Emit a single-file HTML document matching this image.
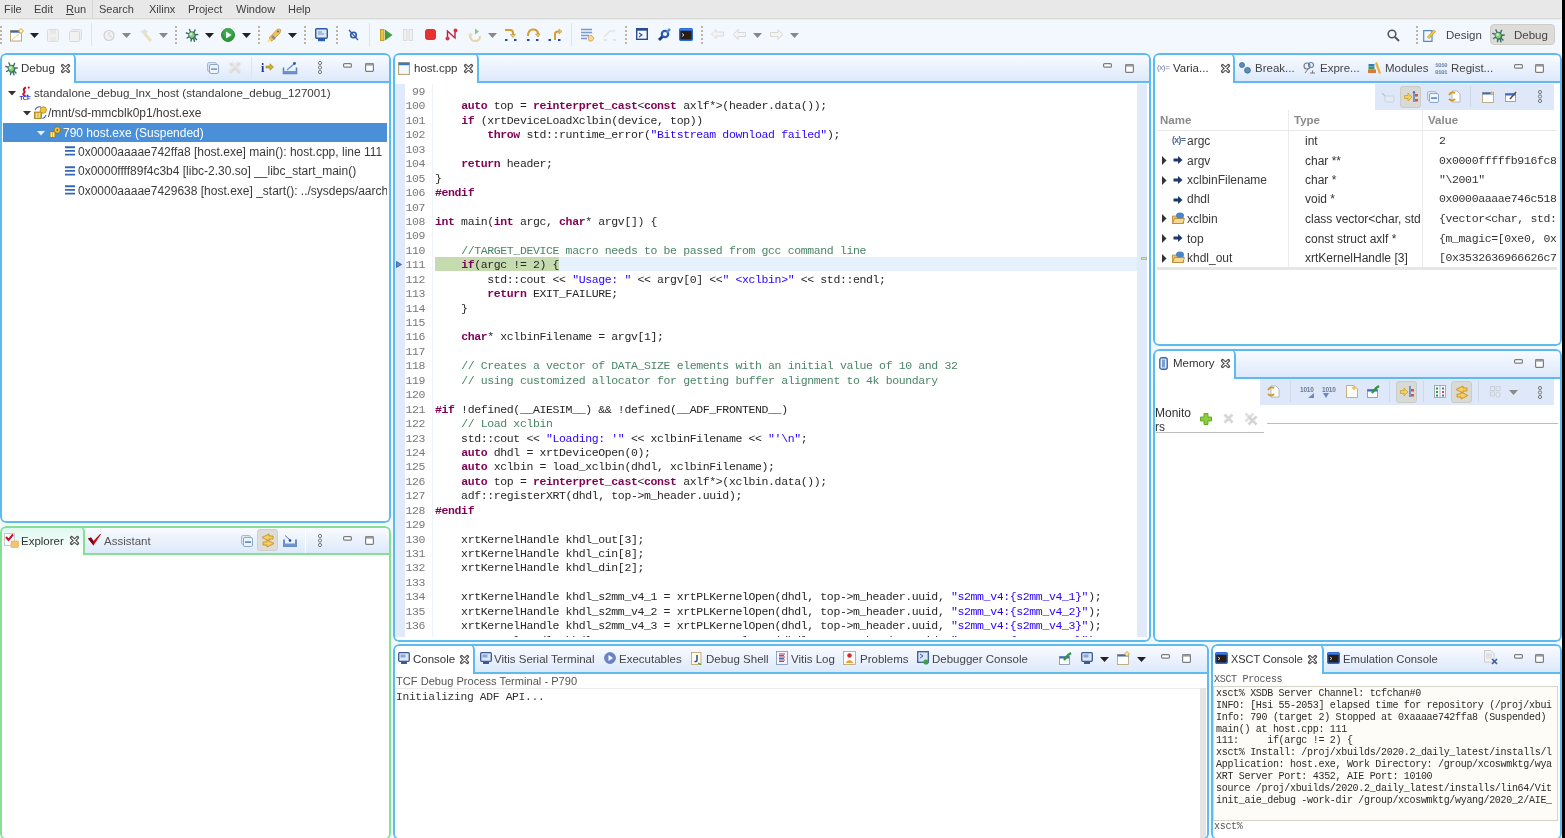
<!DOCTYPE html>
<html><head><meta charset="utf-8">
<style>
*{box-sizing:border-box}
html,body{margin:0;padding:0}
body{width:1565px;height:838px;overflow:hidden;position:relative;background:#f3f7fe;font-family:"Liberation Sans",sans-serif;font-size:12px;color:#222}
.a{position:absolute;white-space:pre}
.menu{position:absolute;left:0;top:0;width:1562px;height:19px;background:#e8e8e8;border-bottom:1px solid #d9d9d5}
.menu span{position:absolute;top:3px;font-size:11px;color:#404040}
.blk{position:absolute;left:1562px;top:0;width:3px;height:838px;background:#000}
.pnl{position:absolute;border-radius:6px;background:#fff;overflow:hidden}
.pnl::after{content:'';position:absolute;left:0;top:0;right:0;bottom:0;border:2px solid #5dbbef;border-radius:6px;pointer-events:none;z-index:9}
.pnl.g::after{border-color:#86e094}
.hdr{position:absolute;left:0;top:0;right:0;height:30px;background:linear-gradient(#fbfcff,#dde9fb);border-bottom:2px solid #5dbbef}
.g .hdr{border-bottom-color:#86e094}
.tab{position:absolute;left:0;top:0;height:30px;background:#fff;border-right:2px solid #5dbbef;border-top-right-radius:6px}
.g .tab{border-right-color:#86e094}
.mono{font-family:"Liberation Mono",monospace}
.code{position:absolute;font-family:"Liberation Mono",monospace;font-size:11.5px;letter-spacing:-0.37px;line-height:14.43px;white-space:pre;color:#262626}
.k{color:#7f0055;font-weight:bold}
.s{color:#2a00ff}
.c{color:#4a8566}
.ln{position:absolute;font-family:"Liberation Mono",monospace;font-size:11.5px;letter-spacing:-0.37px;line-height:14.43px;white-space:pre;color:#787878;text-align:right}
.ic{position:absolute;overflow:visible}
.t{position:absolute;white-space:pre;font-size:11.5px;line-height:14px;color:#333}
.tr{position:absolute;white-space:pre;font-size:12px;line-height:14px;color:#3a3a3a}
</style></head><body><div id="root" style="position:absolute;left:0;top:0;width:1565px;height:838px;overflow:hidden;will-change:transform">
<div class="menu">
<span style="left:4px">File</span><span style="left:34px">Edit</span><span style="left:66px"><u style="text-decoration-thickness:1px">R</u>un</span>
<div style="position:absolute;left:92px;top:0;width:1px;height:18px;background:#d4d4d0"></div>
<span style="left:99px">Search</span><span style="left:149px">Xilinx</span><span style="left:188px">Project</span><span style="left:236px">Window</span><span style="left:288px">Help</span>
</div>
<div class="blk"></div>
<div style="position:absolute;left:0;top:19px;width:1562px;height:1px;background:#e9edf2"></div>
<div style="position:absolute;left:0px;top:26px;width:2px;height:19px;background:repeating-linear-gradient(#bdb3a0 0 2px,transparent 2px 4px)"></div>
<svg class="ic" style="left:10px;top:28px" width="14" height="14" viewBox="0 0 14 14"><rect x="0.5" y="2.5" width="11" height="10.5" fill="#fff" stroke="#b8a060" stroke-width="0.9"/><rect x="0.5" y="2.5" width="11" height="2.2" fill="#3a6ab8"/><path d="M2 12L10 5" stroke="#e6c870" stroke-width="0.8"/><path d="M11 0.5L13.5 3L11 5.5L8.5 3Z" fill="#fff4c0" stroke="#c89a20" stroke-width="0.9"/></svg>
<svg class="ic" style="left:30px;top:33px" width="9" height="5" viewBox="0 0 9 5"><path d="M0 0H9L4.5 5Z" fill="#222"/></svg>
<svg class="ic" style="left:47px;top:29px" width="12" height="13" viewBox="0 0 12 13"><rect x="0.5" y="0.5" width="11" height="12" rx="1" fill="#f0f0f0" stroke="#dcdcdc"/><rect x="3" y="1" width="6" height="4" fill="#e6e6e6"/><rect x="3" y="8" width="6" height="4" fill="#e8e8e8"/></svg>
<svg class="ic" style="left:69px;top:29px" width="13" height="13" viewBox="0 0 13 13"><rect x="2.5" y="0.5" width="10" height="10" rx="1" fill="#f0f0f0" stroke="#dcdcdc"/><rect x="0.5" y="2.5" width="10" height="10" rx="1" fill="#f2f2f2" stroke="#d8d8d8"/></svg>
<div style="position:absolute;left:91px;top:23px;width:1px;height:23px;background:#dde3ea"></div>
<svg class="ic" style="left:103px;top:29px" width="12" height="13" viewBox="0 0 12 13"><circle cx="6" cy="6.5" r="5" fill="#f2f2f2" stroke="#d0d0d0" stroke-width="1.2"/><path d="M6 3V6.5L8.5 8" stroke="#d6d6d6" stroke-width="1.2" fill="none"/></svg>
<svg class="ic" style="left:122px;top:33px" width="9" height="5" viewBox="0 0 9 5"><path d="M0 0H9L4.5 5Z" fill="#888"/></svg>
<svg class="ic" style="left:138px;top:28px" width="15" height="15" viewBox="0 0 15 15"><path d="M2 4L7 1L10 4L7 6Z" fill="#e0e0e0"/><path d="M6 5L13 13" stroke="#e8e0c0" stroke-width="3"/></svg>
<svg class="ic" style="left:159px;top:33px" width="9" height="5" viewBox="0 0 9 5"><path d="M0 0H9L4.5 5Z" fill="#888"/></svg>
<div style="position:absolute;left:175px;top:26px;width:2px;height:19px;background:repeating-linear-gradient(#bdb3a0 0 2px,transparent 2px 4px)"></div>
<svg class="ic" style="left:185px;top:28px" width="14" height="14" viewBox="0 0 14 14"><g transform="translate(0.5 0.5)"><g stroke="#3a6a66" stroke-width="1.4" stroke-linecap="round"><path d="M4 1L5 3.5M9.5 1.5L8.5 4M0.8 4.5L3.2 5.2M12.2 6L9.8 6.2M1.5 9.5L3.5 8.3M11 11L9 9M5.5 12.5L6 10M9 12.8L8.2 10.2"/></g><ellipse cx="6.5" cy="6.8" rx="3.6" ry="3.9" transform="rotate(-30 6.5 6.8)" fill="#2e7a6a"/><ellipse cx="6.2" cy="6.5" rx="2.6" ry="2.9" transform="rotate(-30 6.2 6.5)" fill="#8cc878"/><circle cx="5.6" cy="5.8" r="1.3" fill="#d8f0c0"/></g></svg>
<svg class="ic" style="left:205px;top:33px" width="9" height="5" viewBox="0 0 9 5"><path d="M0 0H9L4.5 5Z" fill="#222"/></svg>
<svg class="ic" style="left:221px;top:28px" width="14" height="14" viewBox="0 0 14 14"><circle cx="7" cy="7" r="6.5" fill="#2a9a3a" stroke="#1a7a2a" stroke-width="0.8"/><circle cx="7" cy="5" r="5" fill="#4ab85a" opacity="0.6"/><path d="M5 3.5V10.5L10.5 7Z" fill="#fff"/></svg>
<svg class="ic" style="left:242px;top:33px" width="9" height="5" viewBox="0 0 9 5"><path d="M0 0H9L4.5 5Z" fill="#222"/></svg>
<div style="position:absolute;left:258px;top:26px;width:2px;height:19px;background:repeating-linear-gradient(#bdb3a0 0 2px,transparent 2px 4px)"></div>
<svg class="ic" style="left:267px;top:28px" width="15" height="15" viewBox="0 0 15 15"><path d="M4 13L2 10L10 1.5Q13 0.5 13.5 1.5Q14 3 13 5L5 13Z" fill="#f0c060" stroke="#c8902a" stroke-width="0.7"/><path d="M5 8L8 11" stroke="#8a8a9a" stroke-width="2.5"/><circle cx="11" cy="3.5" r="1" fill="#3a6ab8"/><path d="M1 14L3 11.5" stroke="#f8e090" stroke-width="2"/></svg>
<svg class="ic" style="left:288px;top:33px" width="9" height="5" viewBox="0 0 9 5"><path d="M0 0H9L4.5 5Z" fill="#222"/></svg>
<div style="position:absolute;left:304px;top:26px;width:2px;height:19px;background:repeating-linear-gradient(#bdb3a0 0 2px,transparent 2px 4px)"></div>
<svg class="ic" style="left:315px;top:28px" width="13" height="14" viewBox="0 0 13 14"><rect x="0.7" y="0.7" width="11.6" height="9.6" rx="1.2" fill="#dbe6f6" stroke="#2a5aa8" stroke-width="1.4"/><path d="M3 4H7M3 6H9" stroke="#5a7ab8" stroke-width="0.8"/><rect x="3" y="11" width="7" height="2.2" fill="#2a5aa8"/></svg>
<div style="position:absolute;left:336px;top:26px;width:2px;height:19px;background:repeating-linear-gradient(#bdb3a0 0 2px,transparent 2px 4px)"></div>
<svg class="ic" style="left:348px;top:29px" width="11" height="12" viewBox="0 0 11 12"><path d="M1 1L10 11" stroke="#3a5aa8" stroke-width="1.2"/><circle cx="5.5" cy="6" r="2.8" fill="none" stroke="#2a5ab0" stroke-width="1.6"/></svg>
<div style="position:absolute;left:369px;top:23px;width:1px;height:23px;background:#dde3ea"></div>
<svg class="ic" style="left:380px;top:29px" width="13" height="12" viewBox="0 0 13 12"><rect x="0.5" y="0.5" width="3.5" height="11" fill="#e8c440" stroke="#b89010" stroke-width="0.8"/><path d="M5 0.5V11.5L12.5 6Z" fill="#3aa040"/></svg>
<svg class="ic" style="left:403px;top:29px" width="10" height="12" viewBox="0 0 10 12"><rect x="0.5" y="0.5" width="3.5" height="11" fill="#f0f0f0" stroke="#dcdcdc"/><rect x="6" y="0.5" width="3.5" height="11" fill="#f0f0f0" stroke="#dcdcdc"/></svg>
<svg class="ic" style="left:425px;top:29px" width="11" height="11" viewBox="0 0 11 11"><rect x="0.5" y="0.5" width="10" height="10" rx="2" fill="#e83030" stroke="#c82020" stroke-width="0.8"/></svg>
<svg class="ic" style="left:445px;top:28px" width="13" height="13" viewBox="0 0 13 13"><path d="M2.5 10.5V3L10 10V2.5" fill="none" stroke="#c02040" stroke-width="1.4"/><circle cx="2.5" cy="10.5" r="2" fill="#e03040"/><circle cx="10.5" cy="2.5" r="2" fill="#e03040"/></svg>
<svg class="ic" style="left:468px;top:28px" width="13" height="14" viewBox="0 0 13 14"><path d="M7 0.5L11 3.5L7 6.5Z" fill="#8ac890"/><path d="M2 7Q2 13 7 13Q12 13 12 8" fill="none" stroke="#e8d4a8" stroke-width="2"/><circle cx="2.5" cy="7" r="1.5" fill="#f4e8c8" stroke="#e0c890" stroke-width="0.6"/></svg>
<svg class="ic" style="left:488px;top:33px" width="9" height="5" viewBox="0 0 9 5"><path d="M0 0H9L4.5 5Z" fill="#888"/></svg>
<svg class="ic" style="left:504px;top:28px" width="13" height="14" viewBox="0 0 13 14"><path d="M1 2H6Q9 2 9 5V7" fill="none" stroke="#d4a030" stroke-width="2"/><path d="M6.5 6.5H11.5L9 9.5Z" fill="#f4d070" stroke="#b88a20" stroke-width="0.6"/><g fill="#2a4aa0"><rect x="1" y="11" width="2.5" height="2"/><rect x="10" y="11" width="2.5" height="2"/></g></svg>
<svg class="ic" style="left:526px;top:28px" width="14" height="14" viewBox="0 0 14 14"><path d="M2 8Q2 1.5 7 1.5Q12 1.5 12 6" fill="none" stroke="#d4a030" stroke-width="2"/><path d="M9.5 6H14L12 9Z" fill="#f4d070" stroke="#b88a20" stroke-width="0.6"/><g fill="#2a4aa0"><rect x="1" y="11" width="2.5" height="2"/><rect x="10" y="11" width="2.5" height="2"/></g></svg>
<svg class="ic" style="left:548px;top:28px" width="14" height="14" viewBox="0 0 14 14"><path d="M7 12V6Q7 3.5 10 3.5H12" fill="none" stroke="#d4a030" stroke-width="2"/><path d="M11 1L14 3.5L11 6Z" fill="#f4d070" stroke="#b88a20" stroke-width="0.6"/><g fill="#2a4aa0"><rect x="0.5" y="11" width="2.5" height="2"/><rect x="10" y="11" width="2.5" height="2"/></g></svg>
<div style="position:absolute;left:571px;top:23px;width:1px;height:23px;background:#dde3ea"></div>
<svg class="ic" style="left:581px;top:28px" width="14" height="14" viewBox="0 0 14 14"><g stroke="#7a9ad0" stroke-width="1.4"><path d="M0 1.5H11M0 4.5H11M0 7.5H8M0 10.5H6"/></g><path d="M7 9L10 7L13 10L11 13H8Z" fill="#f8d8a0" stroke="#d0a050" stroke-width="0.8"/></svg>
<svg class="ic" style="left:603px;top:28px" width="14" height="14" viewBox="0 0 14 14"><path d="M1 9L7 3H11" fill="none" stroke="#e4e4e4" stroke-width="1.6"/><path d="M10 1L13 3L10 5Z" fill="#e8e8e8"/><path d="M1 12H4M10 12H13" stroke="#dedede" stroke-width="1.5"/></svg>
<div style="position:absolute;left:625px;top:26px;width:2px;height:19px;background:repeating-linear-gradient(#bdb3a0 0 2px,transparent 2px 4px)"></div>
<svg class="ic" style="left:636px;top:28px" width="12" height="12" viewBox="0 0 12 12"><rect x="0.7" y="0.7" width="10.6" height="10.6" fill="#f4f8ff" stroke="#2a4a98" stroke-width="1.4"/><rect x="0.7" y="0.7" width="10.6" height="2" fill="#2a4a98"/><path d="M3 5L6 7L3 9" fill="none" stroke="#2a4a98" stroke-width="1.1"/></svg>
<svg class="ic" style="left:657px;top:28px" width="14" height="14" viewBox="0 0 14 14"><path d="M2 12L6 8" stroke="#1a3a80" stroke-width="3"/><circle cx="8" cy="6" r="3.2" fill="none" stroke="#2a5ab0" stroke-width="2.2"/><path d="M10 4L13 1" stroke="#5a8ad0" stroke-width="2.5"/></svg>
<svg class="ic" style="left:679px;top:28px" width="14" height="13" viewBox="0 0 14 13"><rect x="0.7" y="0.7" width="12.6" height="11.6" rx="1.2" fill="#2a1e14" stroke="#2a6ae0" stroke-width="1.4"/><rect x="0.7" y="0.7" width="12.6" height="2" fill="#3a7ae8"/><path d="M3 5.5L5 7L3 8.5" fill="none" stroke="#ddd" stroke-width="0.9"/></svg>
<div style="position:absolute;left:701px;top:26px;width:2px;height:19px;background:repeating-linear-gradient(#bdb3a0 0 2px,transparent 2px 4px)"></div>
<svg class="ic" style="left:711px;top:29px" width="13" height="11" viewBox="0 0 13 11"><path d="M5 0.5L0.5 5L5 9.5V7H12.5V3H5Z" fill="#f4f4f4" stroke="#d8d8d8" stroke-width="0.9"/></svg>
<svg class="ic" style="left:733px;top:29px" width="13" height="11" viewBox="0 0 13 11"><path d="M5 0.5L0.5 5.5L5 10.5V7.5H12.5V3.5H5Z" fill="#f4f4f4" stroke="#d4d4d4" stroke-width="0.9"/></svg>
<svg class="ic" style="left:753px;top:33px" width="9" height="5" viewBox="0 0 9 5"><path d="M0 0H9L4.5 5Z" fill="#888"/></svg>
<svg class="ic" style="left:770px;top:29px" width="13" height="11" viewBox="0 0 13 11"><path d="M8 0.5L12.5 5.5L8 10.5V7.5H0.5V3.5H8Z" fill="#f4f4f4" stroke="#d4d4d4" stroke-width="0.9"/></svg>
<svg class="ic" style="left:790px;top:33px" width="9" height="5" viewBox="0 0 9 5"><path d="M0 0H9L4.5 5Z" fill="#888"/></svg>
<svg class="ic" style="left:1387px;top:29px" width="13" height="13" viewBox="0 0 13 13"><circle cx="5" cy="5" r="3.8" fill="none" stroke="#555" stroke-width="1.6"/><path d="M8 8L12 12" stroke="#555" stroke-width="2"/></svg>
<div style="position:absolute;left:1416px;top:26px;width:2px;height:19px;background:repeating-linear-gradient(#bdb3a0 0 2px,transparent 2px 4px)"></div>
<svg class="ic" style="left:1423px;top:28px" width="14" height="14" viewBox="0 0 14 14"><path d="M0.7 2.7H9V13.3H0.7Z" fill="#f4f8ff" stroke="#5a86c8" stroke-width="1.2"/><path d="M5 10L12 2.5" stroke="#c89a20" stroke-width="2.6"/><path d="M5 10L12 2.5" stroke="#f0d060" stroke-width="1.2"/></svg>
<div class="t" style="left:1446px;top:28px;color:#444">Design</div>
<div style="position:absolute;left:1490px;top:24px;width:65px;height:21px;background:#dddcd8;border:1px solid #cdccc8;border-radius:4px"></div>
<svg class="ic" style="left:1492px;top:29px" width="13" height="13" viewBox="0 0 13 13"><g stroke="#3a6a66" stroke-width="1.4" stroke-linecap="round"><path d="M4 1L5 3.5M9.5 1.5L8.5 4M0.8 4.5L3.2 5.2M12.2 6L9.8 6.2M1.5 9.5L3.5 8.3M11 11L9 9M5.5 12.5L6 10M9 12.8L8.2 10.2"/></g><ellipse cx="6.5" cy="6.8" rx="3.6" ry="3.9" transform="rotate(-30 6.5 6.8)" fill="#2e7a6a"/><ellipse cx="6.2" cy="6.5" rx="2.6" ry="2.9" transform="rotate(-30 6.2 6.5)" fill="#8cc878"/><circle cx="5.6" cy="5.8" r="1.3" fill="#d8f0c0"/></svg>
<div class="t" style="left:1514px;top:28px;color:#444">Debug</div>

<!-- Debug panel -->
<div class="pnl" style="left:0;top:53px;width:391px;height:470px">
 <div class="hdr"></div>
 <div class="tab" style="width:76px"></div>
 <svg class="ic" style="left:5px;top:9px" width="13" height="13" viewBox="0 0 13 13"><g stroke="#3a6a66" stroke-width="1.4" stroke-linecap="round"><path d="M4 1L5 3.5M9.5 1.5L8.5 4M0.8 4.5L3.2 5.2M12.2 6L9.8 6.2M1.5 9.5L3.5 8.3M11 11L9 9M5.5 12.5L6 10M9 12.8L8.2 10.2"/></g><ellipse cx="6.5" cy="6.8" rx="3.6" ry="3.9" transform="rotate(-30 6.5 6.8)" fill="#2e7a6a"/><ellipse cx="6.2" cy="6.5" rx="2.6" ry="2.9" transform="rotate(-30 6.2 6.5)" fill="#8cc878"/><circle cx="5.6" cy="5.8" r="1.3" fill="#d8f0c0"/></svg>
 <div class="t" style="left:21px;top:8px;color:#333">Debug</div>
 <svg class="ic x" style="left:61px;top:11px" width="9" height="9" viewBox="0 0 9 9"><path d="M1.6 1.6L7.4 7.4M7.4 1.6L1.6 7.4" stroke="#4a4a4a" stroke-width="3.4" stroke-linecap="round"/><path d="M1.9 1.9L7.1 7.1M7.1 1.9L1.9 7.1" stroke="#fff" stroke-width="1.3" stroke-linecap="round"/></svg>
 <svg class="ic" style="left:207px;top:9px" width="12" height="12" viewBox="0 0 12 12"><rect x="0.5" y="0.5" width="9" height="9" rx="1.5" fill="#dbe6f3" stroke="#a9bcd6"/><rect x="2.5" y="2.5" width="9" height="9" rx="1.5" fill="#eef4fb" stroke="#8aa8cc"/><rect x="4" y="6.3" width="6" height="1.6" fill="#7b9cc6"/></svg>
 <svg class="ic" style="left:228px;top:8px" width="14" height="14" viewBox="0 0 14 14"><path d="M2 2L12 12M12 2L2 12" stroke="#dcdcdc" stroke-width="3"/><path d="M4 1L13 10M10 1L1 10" stroke="#e8e8e8" stroke-width="2"/></svg>
 <div style="position:absolute;left:251px;top:4px;width:1px;height:21px;background:#dfe5ee"></div>
 <svg class="ic" style="left:261px;top:9px" width="13" height="10" viewBox="0 0 13 10"><text x="0" y="9.5" font-family="Liberation Serif" font-weight="bold" font-size="12" fill="#1a2aa0">i</text><path d="M5 4H9V1.8L12.5 5L9 8.2V6H5Z" fill="#d6b22a" stroke="#9a7d10" stroke-width="0.6"/></svg>
 <svg class="ic" style="left:283px;top:9px" width="14" height="12" viewBox="0 0 14 12"><path d="M0.5 5.5V11.5H13.5V5.5" fill="none" stroke="#5d83c0" stroke-width="1.6"/><rect x="0.5" y="9" width="13" height="2.5" fill="#6f93cc"/><path d="M4 8L11 2" stroke="#6b8ec8" stroke-width="1.2"/><circle cx="11.5" cy="1.5" r="1.4" fill="#1f56b0"/></svg>
 <svg class="ic" style="left:317px;top:8px" width="6" height="13" viewBox="0 0 6 13"><g fill="none" stroke="#7a7a7a" stroke-width="1"><circle cx="3" cy="2" r="1.6"/><circle cx="3" cy="6.5" r="1.6"/><circle cx="3" cy="11" r="1.6"/></g></svg>
 <svg class="ic" style="left:343px;top:10px" width="9" height="5" viewBox="0 0 9 5"><rect x="0.6" y="0.6" width="7.8" height="3.6" rx="1" fill="#fff" stroke="#7d7d7d" stroke-width="1.2"/></svg>
 <svg class="ic" style="left:365px;top:10px" width="9" height="9" viewBox="0 0 9 9"><rect x="0.6" y="0.6" width="7.8" height="7.8" rx="0.8" fill="#fff" stroke="#7d7d7d" stroke-width="1.2"/><rect x="0.6" y="0.6" width="7.8" height="2" fill="#9a9a9a"/></svg>
 <!-- tree -->
 <div style="position:absolute;left:3px;top:70px;width:384px;height:19px;background:#4a90d9"></div>
 <svg class="ic" style="left:8px;top:38px" width="8" height="5" viewBox="0 0 8 5"><path d="M0 0H8L4 4.5Z" fill="#333"/></svg>
 <svg class="ic" style="left:20px;top:33px" width="12" height="14" viewBox="0 0 12 14"><path d="M6 1.5Q3 2.5 4 4.5Q5.5 6 3.5 7.5Q2.5 9 5.5 10" fill="none" stroke="#c8102a" stroke-width="2"/><circle cx="8.8" cy="1.6" r="1.1" fill="#e81020"/><circle cx="7.5" cy="9.6" r="1" fill="#c8102a"/><text x="-0.5" y="14" font-family="Liberation Sans" font-weight="bold" font-size="6" fill="#2030f0" letter-spacing="-0.3">TCF</text></svg>
 <div class="tr" style="left:34px;top:33px;font-size:11.6px">standalone_debug_lnx_host (standalone_debug_127001)</div>
 <svg class="ic" style="left:23px;top:58px" width="8" height="5" viewBox="0 0 8 5"><path d="M0 0H8L4 4.5Z" fill="#333"/></svg>
 <svg class="ic" style="left:34px;top:53px" width="13" height="13" viewBox="0 0 13 13"><rect x="0.5" y="6" width="7" height="6.5" fill="#d8b446" stroke="#a07a10" stroke-width="0.8"/><path d="M2.8 7V12M5.2 7V12" stroke="#fff3c0" stroke-width="0.9"/><circle cx="9.2" cy="4" r="3.2" fill="#f2c442" stroke="#b8870a" stroke-width="0.8"/><path d="M1 4Q3 0 7 1" fill="none" stroke="#3a6ab8" stroke-width="1.1"/><path d="M12 9Q11 12 8.5 12.5" fill="none" stroke="#3a6ab8" stroke-width="1.1"/></svg>
 <div class="tr" style="left:48px;top:53px">/mnt/sd-mmcblk0p1/host.exe</div>
 <svg class="ic" style="left:37px;top:78px" width="8" height="5" viewBox="0 0 8 5"><path d="M0 0H8L4 4.5Z" fill="#e8f0fa"/></svg>
 <svg class="ic" style="left:49px;top:73px" width="12" height="12" viewBox="0 0 12 12"><rect x="0.5" y="5.5" width="6" height="6" fill="#d8b446" stroke="#a07a10" stroke-width="0.8"/><path d="M2.5 6.5V11M4.5 6.5V11" stroke="#fff3c0" stroke-width="0.9"/><circle cx="8.3" cy="4" r="3.2" fill="#f2c442" stroke="#8a6a10" stroke-width="0.8"/><circle cx="8.3" cy="4" r="1" fill="#8a6a10"/></svg>
 <div class="tr" style="left:63px;top:73px;color:#fff">790 host.exe (Suspended)</div>
 <svg class="ic" style="left:65px;top:93px" width="10" height="10" viewBox="0 0 10 10"><path d="M0 1.2H10M0 4.9H10M0 8.6H10" stroke="#3568b4" stroke-width="1.9"/></svg>
 <div class="tr" style="left:78px;top:92px">0x0000aaaae742ffa8 [host.exe] main(): host.cpp, line 111</div>
 <svg class="ic" style="left:65px;top:113px" width="10" height="10" viewBox="0 0 10 10"><path d="M0 1.2H10M0 4.9H10M0 8.6H10" stroke="#3568b4" stroke-width="1.9"/></svg>
 <div class="tr" style="left:78px;top:111px">0x0000ffff89f4c3b4 [libc-2.30.so] __libc_start_main()</div>
 <svg class="ic" style="left:65px;top:132px" width="10" height="10" viewBox="0 0 10 10"><path d="M0 1.2H10M0 4.9H10M0 8.6H10" stroke="#3568b4" stroke-width="1.9"/></svg>
 <div class="tr" style="left:78px;top:131px;width:309px;overflow:hidden">0x0000aaaae7429638 [host.exe] _start(): ../sysdeps/aarch64/start.S</div>
</div>

<div class="pnl g" style="left:0px;top:526px;width:391px;height:314px">
<div class="hdr" style="height:29px"></div>
<div class="tab" style="width:85px;height:29px;background:linear-gradient(#dcf8ef,#fff)"></div>
<div style="position:absolute;left:0px;top:-526px">
<svg class="ic" style="left:4px;top:533px" width="15" height="15" viewBox="0 0 15 15"><rect x="0.5" y="0.5" width="10" height="12" fill="#fff" stroke="#c9c9c9"/><path d="M2 4L4.5 7L9 1.5" fill="none" stroke="#c8102e" stroke-width="2"/><rect x="7" y="8" width="7.5" height="6.5" rx="1" fill="#f2c470" stroke="#d9a84e" stroke-width="0.6"/></svg>
<div class="t" style="left:21px;top:534px;color:#333">Explorer</div>
<svg class="ic" style="left:70px;top:536px" width="9" height="9" viewBox="0 0 9 9"><path d="M1.6 1.6L7.4 7.4M7.4 1.6L1.6 7.4" stroke="#4a4a4a" stroke-width="3.4" stroke-linecap="round"/><path d="M1.9 1.9L7.1 7.1M7.1 1.9L1.9 7.1" stroke="#fff" stroke-width="1.3" stroke-linecap="round"/></svg>
<svg class="ic" style="left:88px;top:533px" width="14" height="13" viewBox="0 0 14 13"><path d="M0 5.5L5.5 12.5L13.5 0.5L11.5 1.5L5.5 8L3 4.5Z" fill="#c01020"/><path d="M0 5.5L5.5 12.5L5.5 8L3 4.5Z" fill="#7a0810"/></svg>
<div class="t" style="left:104px;top:534px;color:#555">Assistant</div>
<svg class="ic" style="left:241px;top:535px" width="12" height="12" viewBox="0 0 12 12"><rect x="0.5" y="0.5" width="9" height="9" rx="1.5" fill="#dbe6f3" stroke="#a9bcd6"/><rect x="2.5" y="2.5" width="9" height="9" rx="1.5" fill="#eef4fb" stroke="#8aa8cc"/><rect x="4" y="6.3" width="6" height="1.6" fill="#5d86c0"/></svg>
<div style="position:absolute;left:257px;top:529px;width:21px;height:22px;background:#dcdcd8;border:1px solid #cfcfcb;border-radius:3px"></div>
<svg class="ic" style="left:261px;top:533px" width="14" height="15" viewBox="0 0 14 15"><path d="M8 1L1 4.5L8 8V6H12V3H8Z" fill="#f3cf6a" stroke="#c98f1a" stroke-width="0.9"/><path d="M6 7L13 10.5L6 14V12H2V9H6Z" fill="#f3cf6a" stroke="#c98f1a" stroke-width="0.9"/></svg>
<svg class="ic" style="left:283px;top:535px" width="14" height="12" viewBox="0 0 14 12"><path d="M1 4.5V11H13V4.5" fill="none" stroke="#5d83c0" stroke-width="1.8"/><rect x="1" y="8.5" width="12" height="3" fill="#6f93cc"/><path d="M2 0.5L7 5" stroke="#5070b8" stroke-width="1"/><circle cx="7" cy="5.5" r="1.3" fill="#1f3fa0"/></svg>
<div style="position:absolute;left:305px;top:529px;width:1px;height:24px;background:#fff"></div>
<svg class="ic" style="left:317px;top:534px" width="6" height="13" viewBox="0 0 6 13"><g fill="none" stroke="#7a7a7a" stroke-width="1"><circle cx="3" cy="2" r="1.6"/><circle cx="3" cy="6.5" r="1.6"/><circle cx="3" cy="11" r="1.6"/></g></svg>
<svg class="ic" style="left:343px;top:536px" width="9" height="5" viewBox="0 0 9 5"><rect x="0.6" y="0.6" width="7.8" height="3.6" rx="1" fill="#fff" stroke="#7d7d7d" stroke-width="1.2"/></svg>
<svg class="ic" style="left:365px;top:536px" width="9" height="9" viewBox="0 0 9 9"><rect x="0.6" y="0.6" width="7.8" height="7.8" rx="0.8" fill="#fff" stroke="#7d7d7d" stroke-width="1.2"/><rect x="0.6" y="0.6" width="7.8" height="2" fill="#9a9a9a"/></svg>
</div></div>

<!-- Editor panel -->
<div class="pnl" style="left:393px;top:53px;width:758px;height:589px">
 <div class="hdr"></div>
 <div class="tab" style="width:86px"></div>
 <svg class="ic" style="left:5px;top:9px" width="12" height="13" viewBox="0 0 12 13"><rect x="0.6" y="0.6" width="10.8" height="11.8" fill="#f4f8fc" stroke="#b8a878" stroke-width="1.1"/><rect x="0.6" y="0.6" width="10.8" height="2.6" fill="#3a78c0"/></svg>
 <div class="t" style="left:21px;top:8px;color:#333">host.cpp</div>
 <svg class="ic" style="left:71px;top:11px" width="9" height="9" viewBox="0 0 9 9"><path d="M1.6 1.6L7.4 7.4M7.4 1.6L1.6 7.4" stroke="#4a4a4a" stroke-width="3.4" stroke-linecap="round"/><path d="M1.9 1.9L7.1 7.1M7.1 1.9L1.9 7.1" stroke="#fff" stroke-width="1.3" stroke-linecap="round"/></svg>
 <svg class="ic" style="left:710px;top:10px" width="9" height="5" viewBox="0 0 9 5"><rect x="0.6" y="0.6" width="7.8" height="3.6" rx="1" fill="#fff" stroke="#7d7d7d" stroke-width="1.2"/></svg>
 <svg class="ic" style="left:732px;top:11px" width="9" height="9" viewBox="0 0 9 9"><rect x="0.6" y="0.6" width="7.8" height="7.8" rx="0.8" fill="#fff" stroke="#7d7d7d" stroke-width="1.2"/><rect x="0.6" y="0.6" width="7.8" height="2" fill="#9a9a9a"/></svg>
 <div style="position:absolute;left:2px;top:31px;width:10px;height:553px;background:#e0eafb"></div>
 <div style="position:absolute;left:39px;top:31px;width:1px;height:553px;background:#eef3fb"></div>
 <div style="position:absolute;left:744px;top:31px;width:10px;height:553px;background:#e0eafb"></div>
 <div style="position:absolute;left:748px;top:204px;width:6px;height:3px;background:#c8e0b0;border:1px solid #a8c890"></div>
 <div style="position:absolute;left:42px;top:204px;width:702px;height:14.43px;background:#e6f1fe"></div>
 <div style="position:absolute;left:42px;top:204px;width:124px;height:14.43px;background:#c6dcb0"></div>
 <svg class="ic" style="left:3px;top:208px" width="6" height="7" viewBox="0 0 6 7"><path d="M0.5 0.5L5.5 3.5L0.5 6.5Z" fill="#5a8ad0" stroke="#2a5aa0" stroke-width="0.8"/></svg>
<div class="ln" style="left:2px;top:32px;width:30px;height:552px;overflow:hidden">99
100
101
102
103
104
105
106
107
108
109
110
111
112
113
114
115
116
117
118
119
120
121
122
123
124
125
126
127
128
129
130
131
132
133
134
135
136
137</div>
<div class="code" style="left:42px;top:32px;width:702px;height:552px;overflow:hidden">
    <span class="k">auto</span> top = <span class="k">reinterpret_cast</span>&lt;<span class="k">const</span> axlf*&gt;(header.data());
    <span class="k">if</span> (xrtDeviceLoadXclbin(device, top))
        <span class="k">throw</span> std::runtime_error(<span class="s">&quot;Bitstream download failed&quot;</span>);

    <span class="k">return</span> header;
}
<span class="k">#endif</span>

<span class="k">int</span> main(<span class="k">int</span> argc, <span class="k">char</span>* argv[]) {

    <span class="c">//TARGET_DEVICE macro needs to be passed from gcc command line</span>
    <span class="k">if</span>(argc != 2) {
        std::cout &lt;&lt; <span class="s">&quot;Usage: &quot;</span> &lt;&lt; argv[0] &lt;&lt;<span class="s">&quot; &lt;xclbin&gt;&quot;</span> &lt;&lt; std::endl;
        <span class="k">return</span> EXIT_FAILURE;
    }

    <span class="k">char</span>* xclbinFilename = argv[1];

    <span class="c">// Creates a vector of DATA_SIZE elements with an initial value of 10 and 32</span>
    <span class="c">// using customized allocator for getting buffer alignment to 4k boundary</span>

<span class="k">#if</span> !defined(__AIESIM__) &amp;&amp; !defined(__ADF_FRONTEND__)
    <span class="c">// Load xclbin</span>
    std::cout &lt;&lt; <span class="s">&quot;Loading: &#x27;&quot;</span> &lt;&lt; xclbinFilename &lt;&lt; <span class="s">&quot;&#x27;\n&quot;</span>;
    <span class="k">auto</span> dhdl = xrtDeviceOpen(0);
    <span class="k">auto</span> xclbin = load_xclbin(dhdl, xclbinFilename);
    <span class="k">auto</span> top = <span class="k">reinterpret_cast</span>&lt;<span class="k">const</span> axlf*&gt;(xclbin.data());
    adf::registerXRT(dhdl, top-&gt;m_header.uuid);
<span class="k">#endif</span>

    xrtKernelHandle khdl_out[3];
    xrtKernelHandle khdl_cin[8];
    xrtKernelHandle khdl_din[2];

    xrtKernelHandle khdl_s2mm_v4_1 = xrtPLKernelOpen(dhdl, top-&gt;m_header.uuid, <span class="s">&quot;s2mm_v4:{s2mm_v4_1}&quot;</span>);
    xrtKernelHandle khdl_s2mm_v4_2 = xrtPLKernelOpen(dhdl, top-&gt;m_header.uuid, <span class="s">&quot;s2mm_v4:{s2mm_v4_2}&quot;</span>);
    xrtKernelHandle khdl_s2mm_v4_3 = xrtPLKernelOpen(dhdl, top-&gt;m_header.uuid, <span class="s">&quot;s2mm_v4:{s2mm_v4_3}&quot;</span>);
    xrtKernelHandle khdl_mm2s_v4_1 = xrtPLKernelOpen(dhdl, top-&gt;m_header.uuid, <span class="s">&quot;mm2s_v4:{mm2s_v4_1}&quot;</span>);</div>
</div>

<div class="pnl" style="left:1153px;top:53px;width:409px;height:293px">
<div class="hdr"></div>
<div class="tab" style="width:82px"></div>
<div style="position:absolute;left:-1153px;top:-53px">
<div class="a" style="left:1157px;top:63px;font-size:8px;color:#6a78a0;letter-spacing:-0.4px">(x)=</div>
<div class="t" style="left:1173px;top:61px;color:#333">Varia...</div>
<svg class="ic" style="left:1221px;top:64px" width="9" height="9" viewBox="0 0 9 9"><path d="M1.6 1.6L7.4 7.4M7.4 1.6L1.6 7.4" stroke="#4a4a4a" stroke-width="3.4" stroke-linecap="round"/><path d="M1.9 1.9L7.1 7.1M7.1 1.9L1.9 7.1" stroke="#fff" stroke-width="1.3" stroke-linecap="round"/></svg>
<svg class="ic" style="left:1239px;top:62px" width="12" height="12" viewBox="0 0 12 12"><circle cx="3" cy="3" r="2.5" fill="#5a90c0" stroke="#2a5a8a" stroke-width="0.7"/><circle cx="8.5" cy="8.3" r="2.9" fill="#5a90c0" stroke="#2a5a8a" stroke-width="0.7"/></svg>
<div class="t" style="left:1255px;top:61px;color:#444">Break...</div>
<svg class="ic" style="left:1303px;top:61px" width="13" height="13" viewBox="0 0 13 13"><circle cx="4" cy="5" r="3" fill="none" stroke="#777" stroke-width="1.1"/><circle cx="8" cy="4" r="2.5" fill="none" stroke="#5a7fb0" stroke-width="1.1"/><path d="M2 12L5 8M7 12H12M9.5 9.5V12" stroke="#777" stroke-width="1"/></svg>
<div class="t" style="left:1320px;top:61px;color:#444">Expre...</div>
<svg class="ic" style="left:1368px;top:62px" width="13" height="12" viewBox="0 0 13 12"><rect x="0.5" y="2" width="6" height="2.5" rx="0.5" fill="#3a7ac8"/><rect x="0.5" y="4.5" width="6" height="3" fill="#3a9a6a"/><rect x="0" y="7.5" width="8" height="3.5" fill="#d87a3a"/><path d="M7 1L9 0L13 11L11 12Z" fill="#f0b030"/></svg>
<div class="t" style="left:1385px;top:61px;color:#444">Modules</div>
<svg class="ic" style="left:1435px;top:61px" width="12" height="13" viewBox="0 0 12 13"><text x="0" y="6" font-family="Liberation Mono" font-weight="bold" font-size="6" fill="#6a84a8" letter-spacing="-0.6">1010</text><text x="0" y="12.5" font-family="Liberation Mono" font-weight="bold" font-size="6" fill="#6a84a8" letter-spacing="-0.6">0101</text></svg>
<div class="t" style="left:1451px;top:61px;color:#444">Regist...</div>
<svg class="ic" style="left:1514px;top:64px" width="9" height="5" viewBox="0 0 9 5"><rect x="0.6" y="0.6" width="7.8" height="3.6" rx="1" fill="#fff" stroke="#7d7d7d" stroke-width="1.2"/></svg>
<svg class="ic" style="left:1535px;top:64px" width="9" height="9" viewBox="0 0 9 9"><rect x="0.6" y="0.6" width="7.8" height="7.8" rx="0.8" fill="#fff" stroke="#7d7d7d" stroke-width="1.2"/><rect x="0.6" y="0.6" width="7.8" height="2" fill="#9a9a9a"/></svg>
<div style="position:absolute;left:1375px;top:84px;width:179px;height:26px;background:#dee8f8"></div>
<svg class="ic" style="left:1380px;top:91px" width="15" height="12" viewBox="0 0 15 12"><path d="M2 2L6 6" stroke="#b8c4d8" stroke-width="1.2"/><rect x="5" y="5" width="9" height="6" rx="1" fill="#e4eaf4" stroke="#c8d2e2"/></svg>
<div style="position:absolute;left:1400px;top:86px;width:21px;height:22px;background:#d9d9d5;border:1px solid #cbcbc7;border-radius:3px"></div>
<svg class="ic" style="left:1404px;top:91px" width="14" height="12" viewBox="0 0 14 12"><path d="M0.5 4.5H4V2L8 6L4 10V7.5H0.5Z" fill="#f0d060" stroke="#c89a20" stroke-width="0.7"/><path d="M10 0V11" stroke="#3a6ab8" stroke-width="1.2"/><rect x="11" y="3" width="3" height="2.5" fill="#e05050"/><rect x="11" y="8" width="3" height="2.5" fill="#e05050"/><path d="M8.5 2L10 0L11.5 2" fill="#3a6ab8"/></svg>
<svg class="ic" style="left:1427px;top:91px" width="12" height="12" viewBox="0 0 12 12"><rect x="0.5" y="0.5" width="9" height="9" rx="1.5" fill="#dbe6f3" stroke="#a9bcd6"/><rect x="2.5" y="2.5" width="9" height="9" rx="1.5" fill="#eef4fb" stroke="#8aa8cc"/><rect x="4" y="6.3" width="6" height="1.6" fill="#5d86c0"/></svg>
<svg class="ic" style="left:1448px;top:90px" width="13" height="13" viewBox="0 0 13 13"><path d="M4 1H9L12 4V12H4Z" fill="#fff" stroke="#aaa" stroke-width="0.8"/><path d="M1 5Q3 1 7 3" fill="none" stroke="#d09a20" stroke-width="1.8"/><path d="M7 9Q4 12 1 9" fill="none" stroke="#d09a20" stroke-width="1.8"/></svg>
<div style="position:absolute;left:1470px;top:86px;width:1px;height:21px;background:#cfd8e6"></div>
<svg class="ic" style="left:1482px;top:90px" width="13" height="13" viewBox="0 0 13 13"><rect x="0.5" y="2.5" width="11" height="10" fill="#fff" stroke="#b0a070" stroke-width="0.8"/><rect x="0.5" y="2.5" width="11" height="2" fill="#3a6ab8"/><path d="M9 0.5L10.5 2L12 0.5L11 3L12.5 4.5L10.5 4L9.5 6L9.5 4L8 3.5L9.5 2.5Z" fill="#f0c050"/></svg>
<svg class="ic" style="left:1505px;top:90px" width="12" height="12" viewBox="0 0 12 12"><rect x="0.5" y="3.5" width="10" height="8" fill="#fff" stroke="#7a90b0" stroke-width="0.8"/><rect x="0.5" y="3.5" width="10" height="2" fill="#3a6ab8"/><path d="M5 9L11 2" stroke="#555" stroke-width="1.6"/></svg>
<svg class="ic" style="left:1537px;top:90px" width="6" height="13" viewBox="0 0 6 13"><g fill="none" stroke="#7a7a7a" stroke-width="1"><circle cx="3" cy="2" r="1.6"/><circle cx="3" cy="6.5" r="1.6"/><circle cx="3" cy="11" r="1.6"/></g></svg>
<div class="t" style="left:1160px;top:113px;color:#8a8a8a;font-weight:bold">Name</div>
<div class="t" style="left:1294px;top:113px;color:#8a8a8a;font-weight:bold">Type</div>
<div class="t" style="left:1428px;top:113px;color:#8a8a8a;font-weight:bold">Value</div>
<div style="position:absolute;left:1288px;top:110px;width:1px;height:158px;background:#ececec"></div>
<div style="position:absolute;left:1422px;top:110px;width:1px;height:158px;background:#ececec"></div>
<div style="position:absolute;left:1157px;top:130px;width:400px;height:1px;background:#e8e8e8"></div>
<div class="a" style="left:1172px;top:135px;font-size:8.5px;font-weight:bold;color:#4a6590;letter-spacing:-0.5px">(x)=</div>
<div class="tr" style="left:1187px;top:134px;color:#3a3a3a">argc</div>
<div class="tr" style="left:1305px;top:134px;width:116px;overflow:hidden;color:#333">int</div>
<div class="a mono" style="left:1439px;top:134px;width:118px;overflow:hidden;font-size:11.5px;letter-spacing:-0.37px;line-height:14px;color:#333">2</div>
<svg class="ic" style="left:1162px;top:156px" width="5" height="9" viewBox="0 0 5 9"><path d="M0 0V9L4.5 4.5Z" fill="#333"/></svg>
<svg class="ic" style="left:1173px;top:156px" width="10" height="8" viewBox="0 0 10 8"><path d="M0.5 2.5H5V0L9.5 4L5 8V5.5H0.5Z" fill="#1f3a6a"/></svg>
<div class="tr" style="left:1187px;top:154px;color:#3a3a3a">argv</div>
<div class="tr" style="left:1305px;top:154px;width:116px;overflow:hidden;color:#333">char **</div>
<div class="a mono" style="left:1439px;top:154px;width:118px;overflow:hidden;font-size:11.5px;letter-spacing:-0.37px;line-height:14px;color:#333">0x0000fffffb916fc8</div>
<svg class="ic" style="left:1162px;top:176px" width="5" height="9" viewBox="0 0 5 9"><path d="M0 0V9L4.5 4.5Z" fill="#333"/></svg>
<svg class="ic" style="left:1173px;top:176px" width="10" height="8" viewBox="0 0 10 8"><path d="M0.5 2.5H5V0L9.5 4L5 8V5.5H0.5Z" fill="#1f3a6a"/></svg>
<div class="tr" style="left:1187px;top:173px;color:#3a3a3a">xclbinFilename</div>
<div class="tr" style="left:1305px;top:173px;width:116px;overflow:hidden;color:#333">char *</div>
<div class="a mono" style="left:1439px;top:173px;width:118px;overflow:hidden;font-size:11.5px;letter-spacing:-0.37px;line-height:14px;color:#333">"\2001"</div>
<svg class="ic" style="left:1173px;top:196px" width="10" height="8" viewBox="0 0 10 8"><path d="M0.5 2.5H5V0L9.5 4L5 8V5.5H0.5Z" fill="#1f3a6a"/></svg>
<div class="tr" style="left:1187px;top:192px;color:#3a3a3a">dhdl</div>
<div class="tr" style="left:1305px;top:192px;width:116px;overflow:hidden;color:#333">void *</div>
<div class="a mono" style="left:1439px;top:192px;width:118px;overflow:hidden;font-size:11.5px;letter-spacing:-0.37px;line-height:14px;color:#333">0x0000aaaae746c518</div>
<svg class="ic" style="left:1162px;top:214px" width="5" height="9" viewBox="0 0 5 9"><path d="M0 0V9L4.5 4.5Z" fill="#333"/></svg>
<svg class="ic" style="left:1172px;top:212px" width="13" height="12" viewBox="0 0 13 12"><path d="M0.5 4H5L6 5.5H11.5V11.5H0.5Z" fill="#f2c060" stroke="#b07a20" stroke-width="0.7"/><path d="M0.5 11.5L2.5 6.5H12.5L11 11.5Z" fill="#f8d890" stroke="#b07a20" stroke-width="0.7"/><ellipse cx="8" cy="3.5" rx="4" ry="3" fill="#4a86c8"/></svg>
<div class="tr" style="left:1187px;top:212px;color:#3a3a3a">xclbin</div>
<div class="tr" style="left:1305px;top:212px;width:116px;overflow:hidden;color:#333">class vector&lt;char, std::allocator&lt;char&gt;&gt;</div>
<div class="a mono" style="left:1439px;top:212px;width:118px;overflow:hidden;font-size:11.5px;letter-spacing:-0.37px;line-height:14px;color:#333">{vector&lt;char, std::allocator&lt;char&gt;&gt; = ...}</div>
<svg class="ic" style="left:1162px;top:234px" width="5" height="9" viewBox="0 0 5 9"><path d="M0 0V9L4.5 4.5Z" fill="#333"/></svg>
<svg class="ic" style="left:1173px;top:234px" width="10" height="8" viewBox="0 0 10 8"><path d="M0.5 2.5H5V0L9.5 4L5 8V5.5H0.5Z" fill="#1f3a6a"/></svg>
<div class="tr" style="left:1187px;top:232px;color:#3a3a3a">top</div>
<div class="tr" style="left:1305px;top:232px;width:116px;overflow:hidden;color:#333">const struct axlf *</div>
<div class="a mono" style="left:1439px;top:232px;width:118px;overflow:hidden;font-size:11.5px;letter-spacing:-0.37px;line-height:14px;color:#333">{m_magic=[0xe0, 0x6c,...]}</div>
<svg class="ic" style="left:1162px;top:254px" width="5" height="9" viewBox="0 0 5 9"><path d="M0 0V9L4.5 4.5Z" fill="#333"/></svg>
<svg class="ic" style="left:1172px;top:251px" width="13" height="12" viewBox="0 0 13 12"><path d="M0.5 4H5L6 5.5H11.5V11.5H0.5Z" fill="#f2c060" stroke="#b07a20" stroke-width="0.7"/><path d="M0.5 11.5L2.5 6.5H12.5L11 11.5Z" fill="#f8d890" stroke="#b07a20" stroke-width="0.7"/><ellipse cx="8" cy="3.5" rx="4" ry="3" fill="#4a86c8"/></svg>
<div class="tr" style="left:1187px;top:251px;color:#3a3a3a">khdl_out</div>
<div class="tr" style="left:1305px;top:251px;width:116px;overflow:hidden;color:#333">xrtKernelHandle [3]</div>
<div class="a mono" style="left:1439px;top:251px;width:118px;overflow:hidden;font-size:11.5px;letter-spacing:-0.37px;line-height:14px;color:#333">[0x3532636966626c7]</div>
<div style="position:absolute;left:1157px;top:267px;width:400px;height:3px;background:#e6e6e6"></div>
</div></div>

<div class="pnl" style="left:1153px;top:349px;width:409px;height:293px">
<div class="hdr"></div>
<div class="tab" style="width:83px"></div>
<div style="position:absolute;left:-1153px;top:-349px">
<svg class="ic" style="left:1159px;top:357px" width="9" height="13" viewBox="0 0 9 13"><rect x="0.8" y="0.8" width="7.4" height="11.4" rx="2" fill="#e8eef8" stroke="#3a64a8" stroke-width="1.4"/><rect x="3" y="2.5" width="3" height="8" fill="#7aa0d8"/></svg>
<div class="t" style="left:1173px;top:356px;color:#333">Memory</div>
<svg class="ic" style="left:1221px;top:359px" width="9" height="9" viewBox="0 0 9 9"><path d="M1.6 1.6L7.4 7.4M7.4 1.6L1.6 7.4" stroke="#4a4a4a" stroke-width="3.4" stroke-linecap="round"/><path d="M1.9 1.9L7.1 7.1M7.1 1.9L1.9 7.1" stroke="#fff" stroke-width="1.3" stroke-linecap="round"/></svg>
<svg class="ic" style="left:1514px;top:359px" width="9" height="5" viewBox="0 0 9 5"><rect x="0.6" y="0.6" width="7.8" height="3.6" rx="1" fill="#fff" stroke="#7d7d7d" stroke-width="1.2"/></svg>
<svg class="ic" style="left:1535px;top:359px" width="9" height="9" viewBox="0 0 9 9"><rect x="0.6" y="0.6" width="7.8" height="7.8" rx="0.8" fill="#fff" stroke="#7d7d7d" stroke-width="1.2"/><rect x="0.6" y="0.6" width="7.8" height="2" fill="#9a9a9a"/></svg>
<div style="position:absolute;left:1260px;top:379px;width:294px;height:26px;background:#dee8f8"></div>
<svg class="ic" style="left:1267px;top:385px" width="13" height="13" viewBox="0 0 13 13"><path d="M4 1H9L12 4V12H4Z" fill="#fff" stroke="#aaa" stroke-width="0.8"/><path d="M1 5Q3 1 7 3" fill="none" stroke="#d09a20" stroke-width="1.8"/><path d="M7 9Q4 12 1 9" fill="none" stroke="#d09a20" stroke-width="1.8"/></svg>
<div style="position:absolute;left:1290px;top:381px;width:1px;height:21px;background:#cfd8e6"></div>
<div style="position:absolute;left:1389px;top:381px;width:1px;height:21px;background:#cfd8e6"></div>
<div style="position:absolute;left:1423px;top:381px;width:1px;height:21px;background:#cfd8e6"></div>
<div style="position:absolute;left:1478px;top:381px;width:1px;height:21px;background:#cfd8e6"></div>
<div class="a" style="left:1300px;top:386px;font-size:6.5px;font-weight:bold;color:#6a7a96;letter-spacing:-0.2px">1010</div>
<svg class="ic" style="left:1308px;top:393px" width="6" height="5" viewBox="0 0 6 5"><path d="M6 0V5H0Z" fill="#6a8ac0"/></svg>
<div class="a" style="left:1322px;top:386px;font-size:6.5px;font-weight:bold;color:#6a7a96;letter-spacing:-0.2px">1010</div>
<svg class="ic" style="left:1323px;top:393px" width="6" height="5" viewBox="0 0 6 5"><path d="M0 0H6L3 5Z" fill="#6a8ac0"/></svg>
<svg class="ic" style="left:1346px;top:385px" width="12" height="13" viewBox="0 0 12 13"><path d="M0.5 0.5H8L11.5 4V12.5H0.5Z" fill="#fff" stroke="#b8a060" stroke-width="0.8"/><path d="M8 0L9 2L11 3L9 4L8 6L7 4L5 3L7 2Z" fill="#f0c050"/></svg>
<svg class="ic" style="left:1367px;top:385px" width="13" height="13" viewBox="0 0 13 13"><rect x="0.5" y="4.5" width="10" height="8" fill="#fff" stroke="#7a90b0" stroke-width="0.8"/><rect x="0.5" y="4.5" width="10" height="2" fill="#3a6ab8"/><path d="M5 8L9 3L12 1" stroke="#2a9a3a" stroke-width="2.2"/></svg>
<div style="position:absolute;left:1396px;top:381px;width:21px;height:22px;background:#d9d9d5;border:1px solid #cbcbc7;border-radius:3px"></div>
<svg class="ic" style="left:1400px;top:386px" width="14" height="12" viewBox="0 0 14 12"><path d="M0.5 4.5H4V2L8 6L4 10V7.5H0.5Z" fill="#f0d060" stroke="#c89a20" stroke-width="0.7"/><path d="M10 0V11" stroke="#3a6ab8" stroke-width="1.2"/><rect x="11" y="3" width="3" height="2.5" fill="#e05050"/><rect x="11" y="8" width="3" height="2.5" fill="#e05050"/></svg>
<svg class="ic" style="left:1434px;top:385px" width="12" height="13" viewBox="0 0 12 13"><rect x="0.5" y="0.5" width="11" height="12" fill="#fff" stroke="#8a9ab0" stroke-width="0.8"/><path d="M6 1V12" stroke="#8a9ab0" stroke-width="0.8"/><g fill="#2a9a3a"><rect x="2" y="2.5" width="2" height="2"/><rect x="2" y="6" width="2" height="2"/><rect x="2" y="9.5" width="2" height="2"/></g><rect x="8" y="6" width="2" height="2" fill="#e04040"/><rect x="8" y="2.5" width="2" height="2" fill="#4070c0"/><rect x="8" y="9.5" width="2" height="2" fill="#4070c0"/></svg>
<div style="position:absolute;left:1451px;top:381px;width:21px;height:22px;background:#d9d9d5;border:1px solid #cbcbc7;border-radius:3px"></div>
<svg class="ic" style="left:1455px;top:385px" width="14" height="15" viewBox="0 0 14 15"><path d="M8 1L1 4.5L8 8V6H12V3H8Z" fill="#f3cf6a" stroke="#c98f1a" stroke-width="0.9"/><path d="M6 7L13 10.5L6 14V12H2V9H6Z" fill="#f3cf6a" stroke="#c98f1a" stroke-width="0.9"/></svg>
<svg class="ic" style="left:1490px;top:386px" width="11" height="12" viewBox="0 0 11 12"><g fill="none" stroke="#c8ccd4" stroke-width="0.8"><rect x="0.5" y="0.5" width="4" height="4"/><rect x="6" y="0.5" width="4" height="4"/><rect x="0.5" y="6" width="4" height="4"/><rect x="6" y="6" width="4" height="5.5" rx="2"/></g></svg>
<svg class="ic" style="left:1509px;top:390px" width="9" height="5" viewBox="0 0 9 5"><path d="M0 0H9L4.5 5Z" fill="#8a8a8a"/></svg>
<svg class="ic" style="left:1537px;top:386px" width="6" height="13" viewBox="0 0 6 13"><g fill="none" stroke="#7a7a7a" stroke-width="1"><circle cx="3" cy="2" r="1.6"/><circle cx="3" cy="6.5" r="1.6"/><circle cx="3" cy="11" r="1.6"/></g></svg>
<div class="a" style="left:1155px;top:406px;font-size:12px;line-height:14px;color:#333">Monito
rs</div>
<svg class="ic" style="left:1200px;top:413px" width="12" height="12" viewBox="0 0 12 12"><path d="M4 0.5H8V4H11.5V8H8V11.5H4V8H0.5V4H4Z" fill="#8ccf3a" stroke="#4f9a10" stroke-width="0.8"/></svg>
<svg class="ic" style="left:1223px;top:413px" width="11" height="11" viewBox="0 0 11 11"><path d="M1.5 1.5L9.5 9.5M9.5 1.5L1.5 9.5" stroke="#d8d8d8" stroke-width="3"/></svg>
<svg class="ic" style="left:1244px;top:412px" width="14" height="14" viewBox="0 0 14 14"><path d="M1.5 1.5L9.5 9.5M9.5 1.5L1.5 9.5" stroke="#e0e0e0" stroke-width="2.5"/><path d="M4.5 4.5L12.5 12.5M12.5 4.5L4.5 12.5" stroke="#d4d4d4" stroke-width="2.5"/></svg>
<div style="position:absolute;left:1156px;top:432px;width:108px;height:1px;background:#bdbdbd"></div>
<div style="position:absolute;left:1267px;top:423px;width:291px;height:1px;background:#bdbdbd"></div>
</div></div>

<div class="pnl" style="left:393px;top:644px;width:816px;height:196px">
<div class="hdr"></div>
<div class="tab" style="width:82px"></div>
<div style="position:absolute;left:-393px;top:-644px">
<svg class="ic" style="left:398px;top:652px" width="12" height="12" viewBox="0 0 12 12"><rect x="0.7" y="0.7" width="10.6" height="8.6" rx="1" fill="#dbe6f6" stroke="#3a5a98" stroke-width="1.3"/><rect x="2.5" y="2.5" width="5" height="3" fill="#8aa6d4"/><rect x="3" y="10" width="6" height="2" fill="#3a5a98"/></svg>
<div class="t" style="left:413px;top:652px;color:#333">Console</div>
<svg class="ic" style="left:460px;top:655px" width="9" height="9" viewBox="0 0 9 9"><path d="M1.6 1.6L7.4 7.4M7.4 1.6L1.6 7.4" stroke="#4a4a4a" stroke-width="3.4" stroke-linecap="round"/><path d="M1.9 1.9L7.1 7.1M7.1 1.9L1.9 7.1" stroke="#fff" stroke-width="1.3" stroke-linecap="round"/></svg>
<svg class="ic" style="left:480px;top:652px" width="12" height="12" viewBox="0 0 12 12"><rect x="0.7" y="0.7" width="10.6" height="8.6" rx="1" fill="#dbe6f6" stroke="#3a5a98" stroke-width="1.3"/><rect x="2.5" y="2.5" width="5" height="3" fill="#8aa6d4"/><rect x="3" y="10" width="6" height="2" fill="#3a5a98"/></svg>
<div class="t" style="left:494px;top:652px;color:#444">Vitis Serial Terminal</div>
<svg class="ic" style="left:604px;top:652px" width="12" height="12" viewBox="0 0 12 12"><circle cx="6" cy="6" r="5.5" fill="#6a86c8" stroke="#4a66a8" stroke-width="0.6"/><path d="M4.5 3V9L9 6Z" fill="#fff"/></svg>
<div class="t" style="left:619px;top:652px;color:#444">Executables</div>
<svg class="ic" style="left:691px;top:652px" width="11" height="13" viewBox="0 0 11 13"><rect x="0.5" y="0.5" width="9.5" height="12" fill="#fffbe8" stroke="#b8a060" stroke-width="0.8"/><path d="M6 3V8Q6 10 3.5 9.5" fill="none" stroke="#2a4aa0" stroke-width="1.5"/><path d="M7 11L10 12.5" stroke="#3aa040" stroke-width="1.2"/></svg>
<div class="t" style="left:706px;top:652px;color:#444">Debug Shell</div>
<svg class="ic" style="left:776px;top:651px" width="12" height="14" viewBox="0 0 12 14"><rect x="0.5" y="0.5" width="11" height="13" fill="#f4f6fa" stroke="#7a90b8" stroke-width="0.8"/><g stroke="#b04060" stroke-width="1"><path d="M3 3H9M3 6H9M3 9H9"/></g><g stroke="#4070c0" stroke-width="1"><path d="M3 4.5H8M3 7.5H8M3 10.5H8"/></g></svg>
<div class="t" style="left:791px;top:652px;color:#444">Vitis Log</div>
<svg class="ic" style="left:843px;top:651px" width="13" height="14" viewBox="0 0 13 14"><rect x="0.5" y="0.5" width="12" height="13" fill="#fff" stroke="#b0a070" stroke-width="0.8"/><circle cx="6.5" cy="4.5" r="2.3" fill="#d03030"/><path d="M2.5 12Q6.5 6 10.5 12Z" fill="#f0a030"/></svg>
<div class="t" style="left:860px;top:652px;color:#444">Problems</div>
<svg class="ic" style="left:917px;top:651px" width="12" height="14" viewBox="0 0 12 14"><rect x="0.7" y="0.7" width="10.6" height="10.6" fill="#dbe6f6" stroke="#3a5a98" stroke-width="1.3"/><path d="M3 3L6 5L3 7" fill="none" stroke="#3a5a98" stroke-width="1"/><circle cx="9" cy="11" r="2.6" fill="#3aa050"/></svg>
<div class="t" style="left:932px;top:652px;color:#444">Debugger Console</div>
<svg class="ic" style="left:1059px;top:652px" width="13" height="13" viewBox="0 0 13 13"><rect x="0.5" y="4.5" width="10" height="8" fill="#fff" stroke="#7a90b0" stroke-width="0.8"/><rect x="0.5" y="4.5" width="10" height="2" fill="#3a6ab8"/><path d="M5 8L9 3L12 1" stroke="#2a9a3a" stroke-width="2.2"/></svg>
<svg class="ic" style="left:1081px;top:652px" width="12" height="12" viewBox="0 0 12 12"><rect x="0.7" y="0.7" width="10.6" height="8.6" rx="1" fill="#dbe6f6" stroke="#3a5a98" stroke-width="1.3"/><rect x="2.5" y="2.5" width="5" height="3" fill="#8aa6d4"/><rect x="3" y="10" width="6" height="2" fill="#3a5a98"/></svg>
<svg class="ic" style="left:1100px;top:657px" width="9" height="5" viewBox="0 0 9 5"><path d="M0 0H9L4.5 5Z" fill="#222"/></svg>
<svg class="ic" style="left:1117px;top:651px" width="13" height="14" viewBox="0 0 13 14"><rect x="0.5" y="3.5" width="11" height="10" fill="#fff" stroke="#b0a070" stroke-width="0.8"/><rect x="0.5" y="3.5" width="11" height="2" fill="#3a6ab8"/><path d="M10 0.5L12.5 3L10 5.5L7.5 3Z" fill="#f6e8b0" stroke="#c89a20" stroke-width="0.8"/></svg>
<svg class="ic" style="left:1137px;top:657px" width="9" height="5" viewBox="0 0 9 5"><path d="M0 0H9L4.5 5Z" fill="#222"/></svg>
<svg class="ic" style="left:1161px;top:654px" width="9" height="5" viewBox="0 0 9 5"><rect x="0.6" y="0.6" width="7.8" height="3.6" rx="1" fill="#fff" stroke="#7d7d7d" stroke-width="1.2"/></svg>
<svg class="ic" style="left:1182px;top:654px" width="9" height="9" viewBox="0 0 9 9"><rect x="0.6" y="0.6" width="7.8" height="7.8" rx="0.8" fill="#fff" stroke="#7d7d7d" stroke-width="1.2"/><rect x="0.6" y="0.6" width="7.8" height="2" fill="#9a9a9a"/></svg>
<div class="t" style="left:396px;top:674px;font-size:11.1px;color:#555">TCF Debug Process Terminal - P790</div>
<div style="position:absolute;left:395px;top:688px;width:812px;height:1px;background:#ececec"></div>
<div class="a mono" style="left:396px;top:690px;font-size:11.3px;letter-spacing:-0.33px;line-height:14px;color:#333">Initializing ADF API...</div>
<div style="position:absolute;left:1200px;top:688px;width:6px;height:160px;background:#e4e4e4"></div>
</div></div>

<div class="pnl" style="left:1211px;top:644px;width:351px;height:196px">
<div class="hdr"></div>
<div class="tab" style="width:113px"></div>
<div style="position:absolute;left:-1211px;top:-644px">
<svg class="ic" style="left:1215px;top:652px" width="13" height="12" viewBox="0 0 13 12"><rect x="0.7" y="0.7" width="11.6" height="10.6" rx="1.2" fill="#2a1e14" stroke="#2a6ae0" stroke-width="1.4"/><rect x="0.7" y="0.7" width="11.6" height="2" fill="#3a7ae8"/><path d="M3 5L5 6.5L3 8" fill="none" stroke="#ddd" stroke-width="0.9"/></svg>
<div class="t" style="left:1231px;top:652px;color:#333;font-size:10.9px">XSCT Console</div>
<svg class="ic" style="left:1308px;top:655px" width="9" height="9" viewBox="0 0 9 9"><path d="M1.6 1.6L7.4 7.4M7.4 1.6L1.6 7.4" stroke="#4a4a4a" stroke-width="3.4" stroke-linecap="round"/><path d="M1.9 1.9L7.1 7.1M7.1 1.9L1.9 7.1" stroke="#fff" stroke-width="1.3" stroke-linecap="round"/></svg>
<svg class="ic" style="left:1327px;top:652px" width="13" height="12" viewBox="0 0 13 12"><rect x="0.7" y="0.7" width="11.6" height="10.6" rx="1.2" fill="#2a1e14" stroke="#2a6ae0" stroke-width="1.4"/><rect x="0.7" y="0.7" width="11.6" height="2" fill="#3a7ae8"/><path d="M3 5L5 6.5L3 8" fill="none" stroke="#ddd" stroke-width="0.9"/></svg>
<div class="t" style="left:1343px;top:652px;color:#444;font-size:11.3px">Emulation Console</div>
<svg class="ic" style="left:1484px;top:650px" width="14" height="15" viewBox="0 0 14 15"><path d="M0.5 0.5H7L10 3.5V12H0.5Z" fill="#f4f4f4" stroke="#c0c0c0" stroke-width="0.8"/><path d="M2 4H8M2 6H8M2 8H8" stroke="#c8c8c8" stroke-width="0.8"/><path d="M8 9L13 14M13 9L8 14" stroke="#3a5a98" stroke-width="1.6"/></svg>
<svg class="ic" style="left:1514px;top:654px" width="9" height="5" viewBox="0 0 9 5"><rect x="0.6" y="0.6" width="7.8" height="3.6" rx="1" fill="#fff" stroke="#7d7d7d" stroke-width="1.2"/></svg>
<svg class="ic" style="left:1535px;top:654px" width="9" height="9" viewBox="0 0 9 9"><rect x="0.6" y="0.6" width="7.8" height="7.8" rx="0.8" fill="#fff" stroke="#7d7d7d" stroke-width="1.2"/><rect x="0.6" y="0.6" width="7.8" height="2" fill="#9a9a9a"/></svg>
<div class="a mono" style="left:1214px;top:674px;font-size:10px;letter-spacing:-0.31px;line-height:12px;color:#555">XSCT Process</div>
<div style="position:absolute;left:1213px;top:686px;width:345px;height:135px;background:#fdfcf6;border:1px solid #d6d3c8"></div>
<div class="a mono" style="left:1216px;top:688px;width:336px;overflow:hidden;font-size:10px;letter-spacing:-0.31px;line-height:11.84px;color:#2a2a2a">xsct% XSDB Server Channel: tcfchan#0
INFO: [Hsi 55-2053] elapsed time for repository (/proj/xbuilds/2020.2_daily_latest/installs/lin64/Vitis/2020.2/data/embeddedsw) : 0.37 seconds
Info: 790 (target 2) Stopped at 0xaaaae742ffa8 (Suspended)
main() at host.cpp: 111
111:     if(argc != 2) {
xsct% Install: /proj/xbuilds/2020.2_daily_latest/installs/lin64/Vitis/2020.2
Application: host.exe, Work Directory: /group/xcoswmktg/wyang/2020_2/AIE_debug
XRT Server Port: 4352, AIE Port: 10100
source /proj/xbuilds/2020.2_daily_latest/installs/lin64/Vitis/2020.2/scripts/xsct/aie/init_aie_debug.tcl
init_aie_debug -work-dir /group/xcoswmktg/wyang/2020_2/AIE_debug</div>
<div class="a mono" style="left:1214px;top:821px;font-size:10px;letter-spacing:-0.31px;line-height:12px;color:#555">xsct%</div>
</div></div>

</div></body></html>
